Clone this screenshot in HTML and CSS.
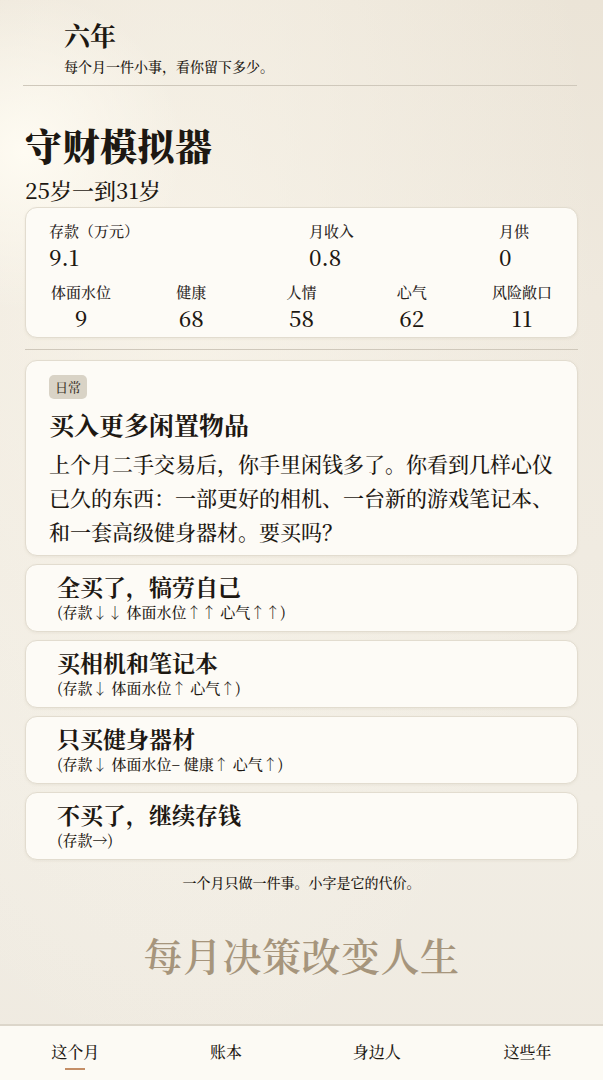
FILE: index.html
```html
<!DOCTYPE html>
<html lang="zh-CN">
<head>
    <meta charset="UTF-8">
    <meta name="viewport" content="width=device-width, initial-scale=1.0">
    <title>六年 · 守财模拟器</title>
    <link rel="stylesheet" href="styles.css">
</head>
<body>
    <header class="top">
        <h1 class="brand">六年</h1>
        <p class="tagline">每个月一件小事，看你留下多少。</p>
    </header>
    <div class="rule"></div>

    <main class="page">
        <h2 class="game-title">守财模拟器</h2>
        <p class="age-range">25岁一到31岁</p>

        <!-- 状态面板 -->
        <section class="card stats">
            <div class="stats-top">
                <div class="stat"><div class="stat-label">存款（万元）</div><div class="stat-value">9.1</div></div>
                <div class="stat"><div class="stat-label">月收入</div><div class="stat-value">0.8</div></div>
                <div class="stat"><div class="stat-label">月供</div><div class="stat-value">0</div></div>
            </div>
            <div class="stats-bottom">
                <div class="stat"><div class="stat-label">体面水位</div><div class="stat-value">9</div></div>
                <div class="stat"><div class="stat-label">健康</div><div class="stat-value">68</div></div>
                <div class="stat"><div class="stat-label">人情</div><div class="stat-value">58</div></div>
                <div class="stat"><div class="stat-label">心气</div><div class="stat-value">62</div></div>
                <div class="stat"><div class="stat-label">风险敞口</div><div class="stat-value">11</div></div>
            </div>
        </section>

        <div class="rule inner"></div>

        <!-- 本月事件 -->
        <section class="card event">
            <span class="tag">日常</span>
            <h3 class="event-title">买入更多闲置物品</h3>
            <p class="event-text">上个月二手交易后，你手里闲钱多了。你看到几样心仪已久的东西：一部更好的相机、一台新的游戏笔记本、和一套高级健身器材。要买吗？</p>
        </section>

        <div class="choices">
            <button class="card choice">
                <span class="choice-title">全买了，犒劳自己</span>
                <span class="choice-cost">(存款↓↓ 体面水位↑↑ 心气↑↑)</span>
            </button>
            <button class="card choice">
                <span class="choice-title">买相机和笔记本</span>
                <span class="choice-cost">(存款↓ 体面水位↑ 心气↑)</span>
            </button>
            <button class="card choice">
                <span class="choice-title">只买健身器材</span>
                <span class="choice-cost">(存款↓ 体面水位– 健康↑ 心气↑)</span>
            </button>
            <button class="card choice">
                <span class="choice-title">不买了，继续存钱</span>
                <span class="choice-cost">(存款→)</span>
            </button>
        </div>

        <p class="hint">一个月只做一件事。小字是它的代价。</p>
        <p class="slogan">每月决策改变人生</p>
    </main>

    <nav class="tabs">
        <a class="tab active">这个月</a>
        <a class="tab">账本</a>
        <a class="tab">身边人</a>
        <a class="tab">这些年</a>
    </nav>
</body>
</html>
```

FILE: styles.css
```css
/* 基础 */
* { box-sizing: border-box; margin: 0; padding: 0; }
html, body { height: 100%; }
body {
    display: flex;
    flex-direction: column;
    font-family: "Noto Serif CJK SC", "Noto Sans CJK SC", serif;
    font-weight: 500;
    color: #1d1812;
    background:
        radial-gradient(circle at 4% 14%, rgba(255,252,243,0.95) 0, rgba(255,252,243,0) 160px),
        radial-gradient(ellipse at 30% 25%, rgba(250,246,236,0.7) 0, rgba(250,246,236,0) 420px),
        linear-gradient(180deg, #ebe4d7 0, #efe9de 300px, #f1ede4 800px, #efeae0 100%);
    overflow: hidden;
}

/* 顶部 */
.top { padding: 18px 0 0 64px; height: 85px; }
.brand { font-size: 26px; font-weight: 700; line-height: 34px; }
.tagline { font-size: 14px; line-height: 20px; margin-top: 4px; }
.rule { height: 1px; background: #cfc8bb; margin: 0 26px 0 23px; }
.rule.inner { margin: 11px 0 10px; }

.page { flex: 1; padding: 0 25px 0 25px; }
.game-title { font-size: 37px; font-weight: 900; line-height: 46px; margin-top: 36px; letter-spacing: 0.5px; }
.age-range { font-size: 22px; line-height: 28px; margin-top: 8px; }

/* 卡片 */
.card {
    background: #fdfbf6;
    border: 1px solid #e2dccf;
    border-radius: 12px;
    box-shadow: 0 1px 3px rgba(120,100,70,0.08);
}

.stats { padding: 13px 0 6px; margin-top: 3px; }
.stats-top { display: grid; grid-template-columns: 260px 190px 1fr; padding-left: 23px; }
.stats-bottom { display: grid; grid-template-columns: repeat(5, 1fr); margin-top: 12px; text-align: center; }
.stat-label { font-size: 15px; line-height: 20px; color: #2a241c; }
.stat-value { font-size: 22px; line-height: 26px; margin-top: 3px; font-weight: 500; }

.event { padding: 13px 22px 7px 23px; }
.tag {
    display: inline-block;
    background: #d9d3c6;
    color: #3d362d;
    font-size: 13px;
    line-height: 24px;
    padding: 0 6px;
    border-radius: 5px;
}
.event-title { font-size: 25px; font-weight: 700; line-height: 30px; margin-top: 10px; }
.event-text { font-size: 21px; line-height: 34px; margin-top: 7px; }

.choices { display: flex; flex-direction: column; gap: 8px; margin-top: 8px; }
.choice {
    display: flex;
    flex-direction: column;
    align-items: flex-start;
    width: 100%;
    padding: 8px 31px 8px;
    font-family: inherit;
    font-weight: 500;
    color: inherit;
    text-align: left;
    cursor: pointer;
}
.choice-title { font-size: 23px; font-weight: 700; line-height: 28px; }
.choice-cost { font-size: 15px; line-height: 22px; }

.hint { text-align: center; font-size: 14px; line-height: 20px; margin-top: 12px; }
.slogan { text-align: center; font-size: 39px; line-height: 50px; margin-top: 37px; color: #a6957c; font-weight: 600; letter-spacing: 0.5px; }

/* 底部导航 */
.tabs {
    display: grid;
    grid-template-columns: repeat(4, 1fr);
    height: 56px;
    background: #fcfaf4;
    border-top: 2px solid #dcd6ca;
}
.tab {
    position: relative;
    text-align: center;
    font-size: 16px;
    line-height: 52px;
    color: #1d1812;
}
.tab.active::after {
    content: "";
    position: absolute;
    left: 50%;
    bottom: 10px;
    width: 20px;
    height: 2px;
    margin-left: -10px;
    background: #c48e66;
}
```
